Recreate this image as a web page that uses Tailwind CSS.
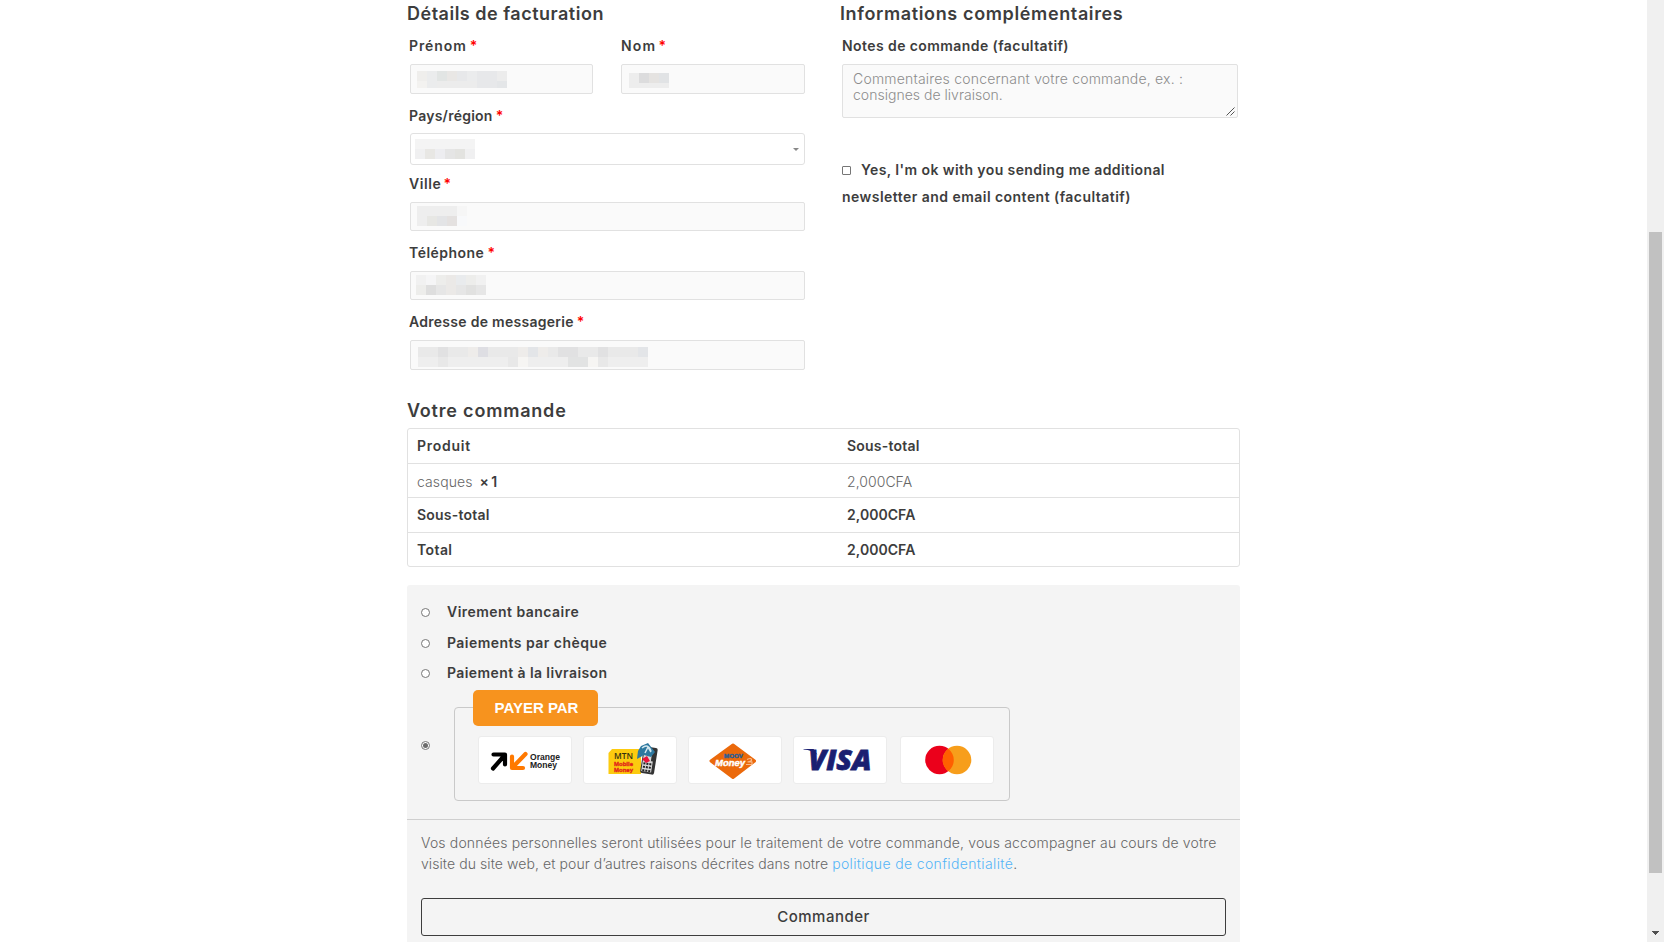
<!DOCTYPE html>
<html lang="fr">
<head>
<meta charset="utf-8">
<title>Commande</title>
<script src="https://cdn.jsdelivr.net/npm/@tailwindcss/browser@4"></script>
</head>
<body class="flex h-[942px] w-[1664px] overflow-hidden bg-white font-['Inter','Liberation_Sans',sans-serif] text-sm text-[#3d3d3d]">
<main class="ml-[407px] w-[833px] shrink-0">
  <div class="flex h-[370px] justify-between">
    <!-- Facturation -->
    <section class="w-[398px]">
      <h3 class="h-[27px] whitespace-nowrap text-lg leading-[27px] font-semibold tracking-[0.5px]">Détails de facturation</h3>
      <div class="ml-[3px] flex justify-between">
        <div class="w-[183px]">
          <label class="-ml-px flex h-[37px] items-center font-semibold"><span class="tracking-[0.9px]">Prénom</span><span class="ml-[3px] text-[#f00]">*</span></label>
          <div class="h-[30px] rounded-[2px] border border-[#e1e1e1] bg-[#fafafa] pt-[6px] pl-[6px]">
            <svg width="90" height="17" shape-rendering="crispEdges"><path fill="#efeeec" d="M0 0h10v10H0z"/><path fill="#ebeced" d="M10 0h10v17H10zM50 0h10v10H50z"/><path fill="#e2e5e4" d="M20 0h10v10H20z"/><path fill="#e9e7e5" d="M30 0h10v10H30z"/><path fill="#e7e8ea" d="M40 0h10v10H40zM60 0h10v17H60zM70 0h10v17H70z"/><path fill="#ececec" d="M20 10h40v7H20zM80 0h10v10H80z"/><path fill="#f3f2f0" d="M0 10h10v7H0z"/><path fill="#e4e6e8" d="M80 10h10v7H80z"/></svg>
          </div>
        </div>
        <div class="w-[184px]">
          <label class="flex h-[37px] items-center font-semibold"><span class="tracking-[1.2px]">Nom</span><span class="ml-[2px] text-[#f00]">*</span></label>
          <div class="h-[30px] rounded-[2px] border border-[#e1e1e1] bg-[#fafafa] pt-[8px] pl-[7px]">
            <svg width="40" height="15" shape-rendering="crispEdges"><path fill="#ededed" d="M0 0h10v15H0zM10 10h30v5H10z"/><path fill="#dcdcdd" d="M10 0h10v10H10z"/><path fill="#e5e3e1" d="M20 0h10v10H20z"/><path fill="#e1e3e5" d="M30 0h10v10H30z"/></svg>
          </div>
        </div>
      </div>
      <div class="ml-[3px] w-[395px]">
        <label class="-ml-px flex h-[39px] items-center pt-[5px] font-semibold"><span class="tracking-[0.24px]">Pays/région</span><span class="ml-[3px] text-[#f00]">*</span></label>
        <div class="flex h-8 justify-between rounded-[3px] border border-[#e1e1e1] bg-white pt-[5px] pr-[5px] pl-1">
          <svg width="60" height="20" shape-rendering="crispEdges"><path fill="#f4f4f4" d="M0 0h60v10H0z"/><path fill="#f0f0f1" d="M0 10h10v10H0zM50 10h10v10H50z"/><path fill="#e8e7e4" d="M10 10h10v10H10z"/><path fill="#ededf0" d="M20 10h10v10H20z"/><path fill="#e5e5e5" d="M30 10h10v10H30z"/><path fill="#e3e3e0" d="M40 10h10v10H40z"/></svg>
          <svg class="mt-[9px]" width="6" height="4"><path fill="#888" d="M0 0h6L3 3z"/></svg>
        </div>
        <label class="-ml-px flex h-[37px] items-center pt-px font-semibold"><span class="tracking-[0.6px]">Ville</span><span class="ml-[2px] text-[#f00]">*</span></label>
        <div class="h-[29px] rounded-[2px] border border-[#e1e1e1] bg-[#fafafa] pt-[3px] pl-[6px]">
          <svg width="50" height="20" shape-rendering="crispEdges"><path fill="#eeeeee" d="M0 0h40v10H0zM0 10h10v10H0z"/><path fill="#f6f6f6" d="M40 0h10v10H40z"/><path fill="#e7e7e4" d="M10 10h10v10H10z"/><path fill="#e3e4e6" d="M20 10h10v10H20z"/><path fill="#e4e1e0" d="M30 10h10v10H30z"/><path fill="#f8f9fb" d="M40 10h10v10H40z"/></svg>
        </div>
        <label class="-ml-px flex h-10 items-center pt-1 font-semibold"><span class="tracking-[0.48px]">Téléphone</span><span class="ml-[3px] text-[#f00]">*</span></label>
        <div class="h-[29px] rounded-[2px] border border-[#e1e1e1] bg-[#fafafa] pt-[3px] pl-[5px]">
          <svg width="70" height="20" shape-rendering="crispEdges"><path fill="#f1f1f1" d="M0 0h10v10H0zM60 0h10v10H60z"/><path fill="#f5f5f6" d="M10 0h10v10H10z"/><path fill="#ededeb" d="M20 0h10v10H20zM50 0h10v10H50zM0 10h10v10H0z"/><path fill="#ebe9e7" d="M30 0h10v20H30z"/><path fill="#e9ebed" d="M40 0h10v10H40z"/><path fill="#dedede" d="M10 10h10v10H10z"/><path fill="#e6e6e6" d="M20 10h10v10H20zM40 10h10v10H40zM60 10h10v10H60z"/><path fill="#e1e1e0" d="M50 10h10v10H50z"/></svg>
        </div>
        <label class="-ml-px flex h-10 items-center pt-1 font-semibold"><span class="tracking-[0.28px]">Adresse de messagerie</span><span class="ml-[3px] text-[#f00]">*</span></label>
        <div class="h-[30px] rounded-[2px] border border-[#e1e1e1] bg-[#fafafa] pt-[6px] pl-[7px]">
          <svg width="230" height="20" shape-rendering="crispEdges"><path fill="#e9e9e9" d="M0 0h230v10H0z"/><path fill="#eeeeee" d="M0 10h230v10H0z"/><path fill="#e1e1e2" d="M20 0h10v10H20zM140 0h20v10h-20zM180 0h10v10h-10z"/><path fill="#dedee3" d="M60 0h10v10H60z"/><path fill="#e3e5e8" d="M110 0h10v10h-10zM220 0h10v10h-10z"/><path fill="#eeecea" d="M50 0h10v10H50zM100 0h10v10h-10zM120 0h10v10h-10z"/><path fill="#e8e8e8" d="M20 10h10v10H20zM90 10h10v10H90zM180 10h10v10h-10z"/><path fill="#e2e3e3" d="M150 10h20v10h-20z"/><path fill="#f6f5f3" d="M100 10h10v10h-10zM170 10h10v10h-10z"/></svg>
        </div>
      </div>
    </section>

    <!-- Informations complémentaires -->
    <section class="w-[400px]">
      <h3 class="h-[27px] whitespace-nowrap text-lg leading-[27px] font-semibold tracking-[0.63px]">Informations complémentaires</h3>
      <div class="ml-[2px] w-[396px]">
        <div class="flex h-[37px] items-center font-semibold tracking-[0.42px]">Notes de commande (facultatif)</div>
        <div class="relative h-[54px] rounded-[2px] border border-[#e1e1e1] bg-[#fafafa] pt-[6px] pl-[10px] leading-4 font-light whitespace-nowrap text-[#8c8c8c]">
          <div class="tracking-[0.2px]">Commentaires concernant votre commande, ex. :</div>
          <div class="tracking-[0.02px]">consignes de livraison.</div>
          <svg class="absolute right-[2px] bottom-[1px]" width="9" height="9"><path stroke="#555" fill="none" d="M.5 8.5l8-8M4.5 8.5l4-4"/></svg>
        </div>
        <div class="mt-[38px] leading-[27px] font-semibold whitespace-nowrap">
          <div class="flex"><span class="mt-[10px] mr-[10px] size-[9px] rounded-[1px] border border-[#767676] bg-white"></span><span class="tracking-[0.41px]">Yes, I'm ok with you sending me additional</span></div>
          <div class="tracking-[0.46px]">newsletter and email content (facultatif)</div>
        </div>
      </div>
    </section>
  </div>

  <h3 class="mt-[23px] h-[35px] text-lg leading-[35px] font-semibold tracking-[0.8px]">Votre commande</h3>
  <div class="h-[139px] divide-y divide-[#e1e1e1] rounded-[3px] border border-[#e1e1e1] leading-[34px] font-semibold">
    <div class="grid h-[35px] grid-cols-[430px_1fr] pl-[9px]"><span class="tracking-[0.75px]">Produit</span><span class="tracking-[0.22px]">Sous-total</span></div>
    <div class="grid h-[34px] grid-cols-[430px_1fr] pl-[9px] leading-[35px]"><span><span class="font-light tracking-[0.1px] text-[#666]">casques</span><span class="ml-[7px] tracking-[-0.6px]">× 1</span></span><span class="font-light tracking-[0.05px] text-[#666]">2,000CFA</span></div>
    <div class="grid h-[35px] grid-cols-[430px_1fr] pl-[9px]"><span class="tracking-[0.22px]">Sous-total</span><span class="tracking-[0.05px]">2,000CFA</span></div>
    <div class="grid h-[33px] grid-cols-[430px_1fr] pl-[9px]"><span class="tracking-[0.4px]">Total</span><span class="tracking-[0.05px]">2,000CFA</span></div>
  </div>

  <!-- Paiement -->
  <section class="mt-[18px] h-[357px] rounded-t-[3px] bg-[#f4f4f4]">
    <div class="h-[235px] border-b border-[#cfcfcf] pt-[12px] pl-[14px] font-semibold">
      <div class="flex h-[31px] items-center"><span class="mr-[17px] size-[9px] rounded-full border border-[#767676] bg-white"></span><span class="-mt-[2px] tracking-[0.46px]">Virement bancaire</span></div>
      <div class="flex h-[31px] items-center"><span class="mr-[17px] size-[9px] rounded-full border border-[#767676] bg-white"></span><span class="-mt-[2px] tracking-[0.46px]">Paiements par chèque</span></div>
      <div class="flex h-[29px] items-center"><span class="mr-[17px] size-[9px] rounded-full border border-[#767676] bg-white"></span><span class="-mt-px tracking-[0.41px]">Paiement à la livraison</span></div>
      <div class="flex h-[114px] items-start">
        <span class="mt-[53px] mr-[24px] flex size-[9px] items-center justify-center rounded-full border border-[#767676] bg-white"><span class="size-[5px] rounded-full bg-[#6b6b6b]"></span></span>
        <div class="relative mt-[19px] h-[94px] w-[556px] rounded-[4px] border border-[#c9c9c9] pt-[28px] pl-[23px]">
          <div class="absolute -top-[18px] left-[18px] flex h-9 w-[125px] items-center justify-center rounded-[5px] bg-[#f7931e] pb-px pl-[2px] font-['Liberation_Sans',sans-serif] text-[15px] font-bold whitespace-nowrap text-white">PAYER PAR</div>
          <div class="flex">
            <div class="h-[48px] w-[94px] shrink-0 rounded-[3px] border border-[#ececec] bg-white">
              <svg width="92" height="46" viewBox="0 0 92 46">
                <path d="M14.500 17.500h11.500M26 17.500v10M14 31.500L25 19" stroke="#000" stroke-width="4.200" stroke-linecap="round" fill="none"/>
                <path d="M33 19.500v11.500M33 31h11M34 30L46.500 17" stroke="#ff7900" stroke-width="4.200" stroke-linecap="round" fill="none"/>
                <text x="51" y="22.500" font-family="Liberation Sans" font-weight="700" font-size="8.500" textLength="30" lengthAdjust="spacingAndGlyphs" fill="#222">Orange</text>
                <text x="51" y="31" font-family="Liberation Sans" font-weight="700" font-size="8.500" textLength="27" lengthAdjust="spacingAndGlyphs" fill="#222">Money</text>
              </svg>
            </div>
            <div class="ml-[11px] h-[48px] w-[94px] shrink-0 rounded-[3px] border border-[#ececec] bg-white">
              <svg width="92" height="46" viewBox="0 0 92 46">
                <path d="M28 12h29v25H24.500V16z" fill="#fccb0f"/>
                <g transform="rotate(9 65 23)"><rect x="58" y="10" width="14" height="27" rx="2" fill="#333"/><path fill="#d8d8d8" d="M59 12h8v12h-8zM59 24h10v11H59z"/><path stroke="#222" stroke-width="2" stroke-dasharray="2 1" d="M60 27h9M60 30.500h9M60 34h9"/></g>
                <path d="M57 9l7-3 7 9-4 5-7-2-7 4 1-8z" fill="#2e789f"/><path d="M58 11q6-5 9 3M61 16l3-6 3 5" fill="none" stroke="#d5e8ef" stroke-width="1.500"/>
                <path d="M58 22l5-3 3 5-4 2z" fill="#e9143a"/>
                <text x="30" y="22" font-family="Open Sans" font-weight="600" font-size="9.500" textLength="19" lengthAdjust="spacingAndGlyphs" fill="#33300f">MTN</text>
                <text x="30" y="28.500" font-family="Liberation Sans" font-weight="700" font-size="6" textLength="19" lengthAdjust="spacingAndGlyphs" stroke="#e2231a" stroke-width=".3" fill="#e2231a">Mobile</text>
                <text x="30" y="34.500" font-family="Liberation Sans" font-weight="700" font-size="6" textLength="19" lengthAdjust="spacingAndGlyphs" stroke="#e2231a" stroke-width=".3" fill="#e2231a">Money</text>
              </svg>
            </div>
            <div class="ml-[11px] h-[48px] w-[94px] shrink-0 rounded-[3px] border border-[#ececec] bg-white">
              <svg width="92" height="46" viewBox="0 0 92 46">
                <path d="M44 8L65.500 24 44 40.500 22 24z" fill="#eb690b" stroke="#eb690b" stroke-width="3" stroke-linejoin="round"/>
                <text x="35" y="21" font-family="Liberation Sans" font-weight="700" font-size="5.500" textLength="19" lengthAdjust="spacingAndGlyphs" stroke="#2d5f94" stroke-width=".4" fill="#2d5f94">MOOV</text>
                <text x="26" y="28.500" font-family="Liberation Sans" font-style="italic" font-weight="700" font-size="9" textLength="30" lengthAdjust="spacingAndGlyphs" stroke="#fff" stroke-width=".4" fill="#fff">Money</text>
                <path d="M58 22.500q4-2 4.500 0t-4 2.500h4.500v2.500H57" fill="none" stroke="#f8bb8b" stroke-width="1.200"/>
              </svg>
            </div>
            <div class="ml-[11px] h-[48px] w-[94px] shrink-0 rounded-[3px] border border-[#ececec] bg-white">
              <svg width="92" height="46" viewBox="0 0 92 46">
                <text x="14.500" y="33" font-family="Open Sans" font-style="italic" font-weight="800" font-size="29" textLength="63" lengthAdjust="spacingAndGlyphs" stroke="#1a1f71" stroke-width=".8" fill="#1a1f71">VISA</text>
                <path d="M9.500 12h10l4 6q-5-5-14-5.500z" fill="#1a1f71"/>
              </svg>
            </div>
            <div class="ml-[13px] h-[48px] w-[94px] shrink-0 rounded-[3px] border border-[#ececec] bg-white">
              <svg width="92" height="46" viewBox="0 0 92 46"><circle cx="38.500" cy="23" r="14.300" fill="#eb001b"/><circle cx="56" cy="23" r="14.300" fill="#f79e1b"/><path d="M47.250 11.700a14.300 14.300 0 0 1 0 22.600a14.300 14.300 0 0 1 0-22.600z" fill="#ff5f00"/></svg>
            </div>
          </div>
        </div>
      </div>
    </div>
    <div class="pt-[12px] pl-[14px]">
      <p class="leading-[21px] font-light whitespace-nowrap text-[#666]"><span class="block tracking-[0.16px]">Vos données personnelles seront utilisées pour le traitement de votre commande, vous accompagner au cours de votre</span><span class="tracking-[0.08px]">visite du site web, et pour d’autres raisons décrites dans notre</span> <a class="tracking-[0.36px] text-[#55b5f7]">politique de confidentialité</a>.</p>
      <button class="mt-[24px] h-[38px] w-[805px] rounded-[3px] border border-[#3d3d3d] text-[15px] font-medium tracking-[0.5px]">Commander</button>
    </div>
  </section>
</main>

<!-- Barre de défilement -->
<aside class="ml-auto flex w-[17px] flex-col items-center bg-[#f0f0f0] pt-[232px]">
  <div class="h-[641px] w-[13px] bg-[#c1c1c1]"></div>
  <svg class="mt-[58px]" width="7" height="4" shape-rendering="crispEdges"><path fill="#505050" d="M0 0h7v1H0zM1 1h5v1H1zM2 2h3v1H2zM3 3h1v1H3z"/></svg>
</aside>
</body>
</html>
